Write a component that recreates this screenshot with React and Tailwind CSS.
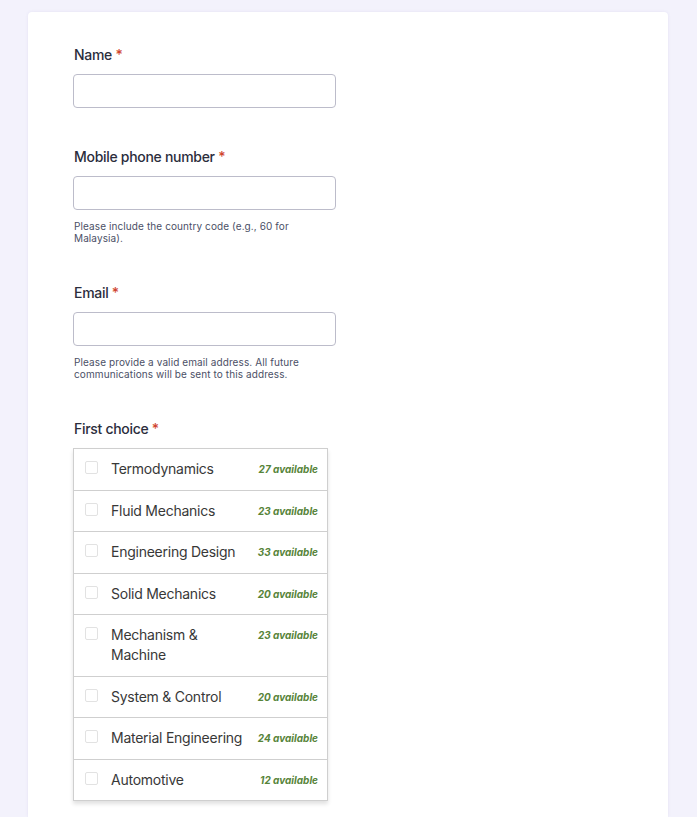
import React from "react";

const courses = [
  { name: "Termodynamics", count: 27 },
  { name: "Fluid Mechanics", count: 23 },
  { name: "Engineering Design", count: 33 },
  { name: "Solid Mechanics", count: 20 },
  { name: "Mechanism & Machine", count: 23 },
  { name: "System & Control", count: 20 },
  { name: "Material Engineering", count: 24 },
  { name: "Automotive", count: 12 },
];

function Label({ children }) {
  return (
    <label className="block pt-px text-[14px] leading-[20px] font-medium tracking-[-0.3px] text-[#2b2d3c]">
      {children} <span className="text-[#d0452f]">*</span>
    </label>
  );
}

function TextField({ label, help }) {
  return (
    <div className="mb-[38px]">
      <Label>{label}</Label>
      <input
        type="text"
        className="mt-[9px] block w-[263px] h-[34px] -ml-px rounded-[4px] border border-[#bcbcca] bg-white outline-none"
      />
      {help && (
        <p className="mt-[10px] w-[250px] text-[10px] leading-[12px] tracking-[0.1px] text-[#4b4f66]">{help}</p>
      )}
    </div>
  );
}

export default function App() {
  return (
    <div className="min-h-[817px] bg-[#f3f2fc] px-[28px] pt-[12px] font-['Inter',sans-serif]">
      <div className="min-h-[805px] w-[640px] rounded-t-[4px] bg-white pl-[46px] pt-[32px] shadow-[0_0_3px_rgba(120,110,180,0.12)]">
        <TextField label="Name" />
        <TextField
          label="Mobile phone number"
          help="Please include the country code (e.g., 60 for Malaysia)."
        />
        <TextField
          label="Email"
          help="Please provide a valid email address. All future communications will be sent to this address."
        />
        <div>
          <Label>First choice</Label>
          <div className="mt-[9px] -ml-px w-[255px] border border-[#cfcfcf] bg-white shadow-[0_3px_4px_rgba(0,0,0,0.12)]">
            {courses.map((c, i) => (
              <div
                key={c.name}
                className={`flex items-start py-[10.25px] pl-[11px] pr-[9px] ${i > 0 ? "border-t border-[#cfcfcf]" : ""}`}
              >
                <span className="mt-[2px] h-[13px] w-[13px] shrink-0 rounded-[2px] border border-[#e2e2e2] bg-white" />
                <span className="ml-[13px] flex-1 text-[14px] leading-[20px] tracking-[-0.25px] text-[#383838]">{c.name}</span>
                <span className="ml-2 shrink-0 text-[10px] leading-[20px] font-bold italic text-[#57843a]">
                  {c.count} available
                </span>
              </div>
            ))}
          </div>
        </div>
      </div>
    </div>
  );
}
